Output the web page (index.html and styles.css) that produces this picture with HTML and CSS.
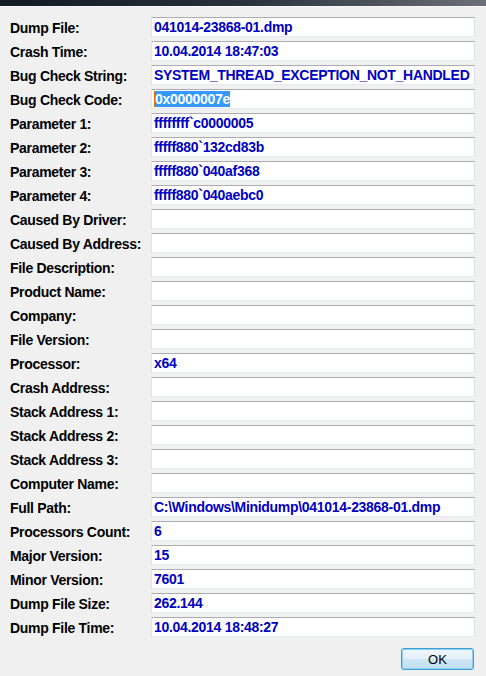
FILE: index.html
```html
<!DOCTYPE html>
<html lang="en">
<head>
    <meta charset="UTF-8">
    <title>Dump Properties</title>
    <link rel="stylesheet" href="styles.css">
</head>
<body>
    <!-- window title strip -->
    <div class="title-strip"></div>

    <div class="props">
        <div class="prop-label">Dump File:</div>
        <div class="prop-field">041014-23868-01.dmp</div>

        <div class="prop-label">Crash Time:</div>
        <div class="prop-field">10.04.2014 18:47:03</div>

        <div class="prop-label">Bug Check String:</div>
        <div class="prop-field">SYSTEM_THREAD_EXCEPTION_NOT_HANDLED</div>

        <div class="prop-label">Bug Check Code:</div>
        <div class="prop-field"><span class="caret"></span><span class="selected">0x0000007e</span></div>

        <div class="prop-label">Parameter 1:</div>
        <div class="prop-field">ffffffff`c0000005</div>

        <div class="prop-label">Parameter 2:</div>
        <div class="prop-field">fffff880`132cd83b</div>

        <div class="prop-label">Parameter 3:</div>
        <div class="prop-field">fffff880`040af368</div>

        <div class="prop-label">Parameter 4:</div>
        <div class="prop-field">fffff880`040aebc0</div>

        <div class="prop-label">Caused By Driver:</div>
        <div class="prop-field"></div>

        <div class="prop-label">Caused By Address:</div>
        <div class="prop-field"></div>

        <div class="prop-label">File Description:</div>
        <div class="prop-field"></div>

        <div class="prop-label">Product Name:</div>
        <div class="prop-field"></div>

        <div class="prop-label">Company:</div>
        <div class="prop-field"></div>

        <div class="prop-label">File Version:</div>
        <div class="prop-field"></div>

        <div class="prop-label">Processor:</div>
        <div class="prop-field">x64</div>

        <div class="prop-label">Crash Address:</div>
        <div class="prop-field"></div>

        <div class="prop-label">Stack Address 1:</div>
        <div class="prop-field"></div>

        <div class="prop-label">Stack Address 2:</div>
        <div class="prop-field"></div>

        <div class="prop-label">Stack Address 3:</div>
        <div class="prop-field"></div>

        <div class="prop-label">Computer Name:</div>
        <div class="prop-field"></div>

        <div class="prop-label">Full Path:</div>
        <div class="prop-field">C:\Windows\Minidump\041014-23868-01.dmp</div>

        <div class="prop-label">Processors Count:</div>
        <div class="prop-field">6</div>

        <div class="prop-label">Major Version:</div>
        <div class="prop-field">15</div>

        <div class="prop-label">Minor Version:</div>
        <div class="prop-field">7601</div>

        <div class="prop-label">Dump File Size:</div>
        <div class="prop-field">262.144</div>

        <div class="prop-label">Dump File Time:</div>
        <div class="prop-field">10.04.2014 18:48:27</div>
    </div>

    <div class="footer">
        <button class="btn-ok">OK</button>
    </div>
</body>
</html>
```

FILE: styles.css
```css
* {
    margin: 0;
    padding: 0;
    box-sizing: border-box;
}

body {
    background-color: #f0f0f0;
    font-family: 'Liberation Sans', Arial, sans-serif;
    width: 486px;
    height: 676px;
    overflow: hidden;
}

.title-strip {
    height: 7px;
    background: linear-gradient(to right, #141a24 0%, #2a313b 50%, #6c7076 100%);
    border-bottom: 1px solid #f8f8f8;
}

/* label / field grid */
.props {
    display: grid;
    grid-template-columns: 151px 324px;
    grid-auto-rows: 20px;
    row-gap: 4px;
    margin-top: 10px;
}

.prop-label {
    padding-left: 10px;
    font-size: 14px;
    letter-spacing: -0.3px;
    font-weight: bold;
    color: #000;
    line-height: 22px;
    white-space: nowrap;
}

.prop-field {
    background-color: #fff;
    border-top: 1px solid #abadb3;
    border-left: 1px solid #e2e3ea;
    border-right: 1px solid #dbdfe6;
    border-bottom: 1px solid #e3e9ef;
    padding-left: 2px;
    font-size: 14px;
    letter-spacing: -0.3px;
    font-weight: bold;
    color: #0000c0;
    line-height: 18px;
    white-space: nowrap;
    overflow: hidden;
    display: flex;
    align-items: center;
}

.caret {
    width: 1px;
    height: 16px;
    background-color: #e07000;
}

.selected {
    background-color: #3399ff;
    color: #fff;
    line-height: 16px;
}

.footer {
    display: flex;
    justify-content: flex-end;
    padding: 11px 12px 0 0;
}

.btn-ok {
    width: 73px;
    height: 22px;
    border: 1px solid #3c9ed6;
    border-radius: 3px;
    background: linear-gradient(to bottom, #f0f7fc 0%, #e3eff8 50%, #cfe6f4 51%, #c2dff1 100%);
    box-shadow: inset 0 0 0 1px #8fd0ef;
    font-family: 'Liberation Sans', Arial, sans-serif;
    font-size: 13px;
    color: #000;
}
```
